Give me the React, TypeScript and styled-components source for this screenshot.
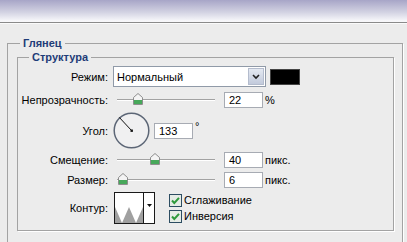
import styled, { createGlobalStyle } from "styled-components";

const GlobalStyle = createGlobalStyle`
  html, body {
    margin: 0;
    padding: 0;
    background: #ececec;
  }
  body {
    font-family: "Liberation Sans", Arial, sans-serif;
    font-size: 11px;
    color: #000;
  }
`;

const TitleStrip = styled.div`
  height: 22px;
  background: linear-gradient(#a7a5c7, #d2d2e2 55%, #f7f7fa 95%);
  border-bottom: 1px solid #8a8a8a;
  box-shadow: 0 1px 0 #fafafa;
`;

const Group = styled.fieldset<{ $outer?: boolean }>`
  margin: ${(p) => (p.$outer ? "13px 4px 0 7px" : "0 8px 0 9px")};
  padding: ${(p) => (p.$outer ? "0 0 20px 0" : "0 0 6px 0")};
  border: 1px solid #a3a3a3;
  box-shadow: 1px 1px 0 #fff;
  min-width: 0;
`;

const Legend = styled.legend<{ $indent: number }>`
  margin-left: ${(p) => p.$indent}px;
  padding: 0 3px;
  font-weight: bold;
  color: #1f3c78;
  line-height: 14px;
`;

const Row = styled.div<{ $h: number; $top: number }>`
  display: flex;
  align-items: center;
  height: ${(p) => p.$h}px;
  margin-top: ${(p) => p.$top}px;
`;

const Label = styled.span`
  flex: none;
  width: 90px;
  padding-right: 5px;
  text-align: right;
`;

const Select = styled.div`
  box-sizing: border-box;
  display: flex;
  align-items: center;
  width: 153px;
  height: 21px;
  border: 1px solid #909aa8;
  background: #fff;
  padding: 1px 1px 1px 3px;
`;

const SelectText = styled.span`
  flex: 1;
`;

const DropButton = styled.div`
  box-sizing: border-box;
  width: 16px;
  height: 17px;
  display: flex;
  align-items: center;
  justify-content: center;
  border: 1px solid #b4bccd;
  background: linear-gradient(#e4e9f2, #c2cadb);
`;

const Swatch = styled.div`
  box-sizing: border-box;
  width: 30px;
  height: 16px;
  margin-left: 4px;
  background: #000;
  border: 1px solid #444;
`;

const Track = styled.div`
  position: relative;
  width: 98px;
  height: 2px;
  margin: 0 9px 0 4px;
  border-top: 1px solid #a2a2a2;
  box-sizing: border-box;
  background: #fff;
`;

const Thumb = styled.svg`
  position: absolute;
  top: -7px;
  width: 10px;
  height: 12px;
`;

const NumField = styled.div<{ $left?: number }>`
  box-sizing: border-box;
  width: 39px;
  height: 16px;
  margin-left: ${(p) => p.$left ?? 0}px;
  padding-left: 4px;
  line-height: 14px;
  border: 1px solid #a7abb3;
  background: #fff;
`;

const Unit = styled.span<{ $raise?: boolean }>`
  margin-left: 2px;
  align-self: ${(p) => (p.$raise ? "flex-start" : "center")};
  margin-top: ${(p) => (p.$raise ? "8px" : "0")};
`;

const Dial = styled.svg`
  width: 38px;
  height: 37px;
  flex: none;
`;

const ContourBox = styled.div`
  box-sizing: border-box;
  display: flex;
  width: 41px;
  height: 32px;
  margin-left: 1px;
  border: 1px solid #1a1a1a;
  background: #fff;
`;

const ContourPreview = styled.svg`
  width: 28px;
  height: 30px;
  border-right: 1px solid #1a1a1a;
`;

const ContourArrow = styled.div`
  flex: 1;
  display: flex;
  justify-content: center;
  padding-top: 11px;
`;

const Checks = styled.div`
  display: flex;
  flex-direction: column;
  gap: 3px;
  margin-left: 14px;
`;

const CheckRow = styled.div`
  display: flex;
  align-items: center;
  gap: 2px;
  height: 13px;
`;

function Slider({ at, value }: { at: number; value: string }) {
  return (
    <>
      <Track>
        <Thumb viewBox="0 0 10 12" style={{ left: at - 5 }}>
          <path d="M5 0.5 L9.5 4.5 V11.5 H0.5 V4.5 Z" fill="#f4f4f4" stroke="#8d8d8d" />
          <path d="M1 7 H9 V11 H1 Z" fill="#47a85a" />
        </Thumb>
      </Track>
      <NumField>{value}</NumField>
    </>
  );
}

function Check({ label }: { label: string }) {
  return (
    <CheckRow>
      <svg width="13" height="13" viewBox="0 0 13 13">
        <rect x="0.5" y="0.5" width="12" height="12" fill="#e6ece6" stroke="#2d4d62" />
        <path d="M3 6.5 L5.3 9 L10 3.8" fill="none" stroke="#2f9a3c" strokeWidth="2" />
      </svg>
      <span>{label}</span>
    </CheckRow>
  );
}

export default function App() {
  return (
    <>
      <GlobalStyle />
      <TitleStrip />
      <Group $outer>
        <Legend $indent={12}>Глянец</Legend>
        <Group>
          <Legend $indent={11}>Структура</Legend>
          <Row $h={21} $top={2}>
            <Label>Режим:</Label>
            <Select>
              <SelectText>Нормальный</SelectText>
              <DropButton>
                <svg width="8" height="6" viewBox="0 0 8 6">
                  <path d="M1 1 L4 4 L7 1" fill="none" stroke="#222" strokeWidth="1.6" />
                </svg>
              </DropButton>
            </Select>
            <Swatch />
          </Row>
          <Row $h={16} $top={5}>
            <Label>Непрозрачность:</Label>
            <Slider at={21} value="22" />
            <Unit>%</Unit>
          </Row>
          <Row $h={37} $top={4}>
            <Label>Угол:</Label>
            <Dial viewBox="0 0 38 37">
              <circle cx="18.5" cy="18.5" r="17.3" fill="#f0f0f1" stroke="#5c6676" strokeWidth="1.5" />
              <line x1="18.5" y1="18.5" x2="6.3" y2="5.4" stroke="#111" strokeWidth="1" />
              <rect x="17.5" y="17.5" width="2.4" height="2.4" fill="#111" />
            </Dial>
            <NumField $left={3}>133</NumField>
            <Unit $raise>°</Unit>
          </Row>
          <Row $h={16} $top={3}>
            <Label>Смещение:</Label>
            <Slider at={38} value="40" />
            <Unit>пикс.</Unit>
          </Row>
          <Row $h={16} $top={4}>
            <Label>Размер:</Label>
            <Slider at={6} value="6" />
            <Unit>пикс.</Unit>
          </Row>
          <Row $h={32} $top={4}>
            <Label>Контур:</Label>
            <ContourBox>
              <ContourPreview viewBox="0 0 28 30">
                <path d="M0 14 L7 30 L14 14 L21 30 L28 14 V30 H0 Z" fill="#a0a0a0" />
              </ContourPreview>
              <ContourArrow>
                <svg width="5" height="3" viewBox="0 0 5 3">
                  <path d="M0 0 H5 L2.5 3 Z" fill="#111" />
                </svg>
              </ContourArrow>
            </ContourBox>
            <Checks>
              <Check label="Сглаживание" />
              <Check label="Инверсия" />
            </Checks>
          </Row>
        </Group>
      </Group>
    </>
  );
}
